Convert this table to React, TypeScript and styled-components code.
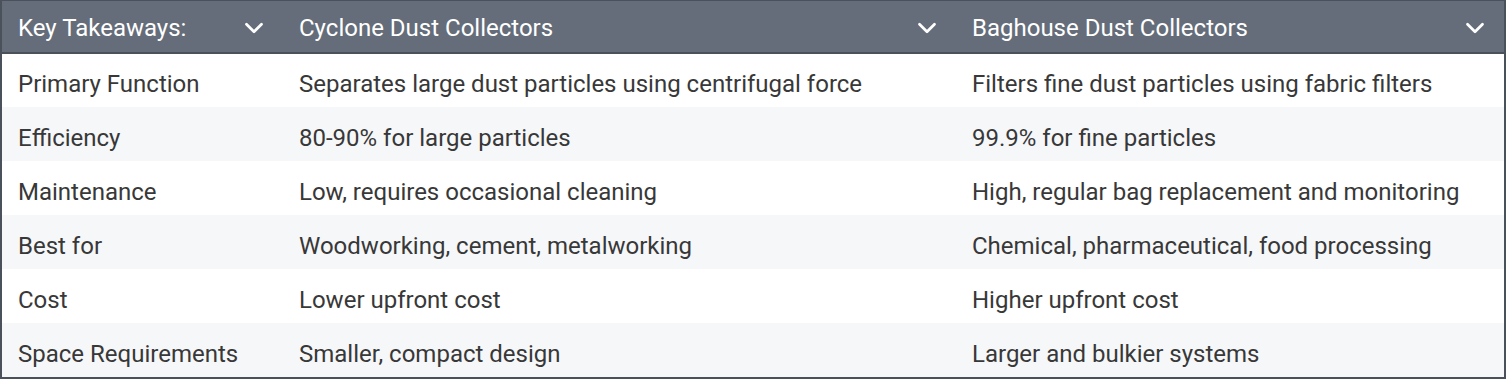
import React from "react";
import styled, { createGlobalStyle } from "styled-components";
import { ChevronDown } from "lucide-react";

const GlobalStyle = createGlobalStyle`
  html, body {
    margin: 0;
    padding: 0;
    background: #ffffff;
  }
  body {
    font-family: Roboto, "Liberation Sans", Arial, sans-serif;
  }
`;

const TableContainer = styled.div`
  width: 1506px;
  box-sizing: border-box;
  border: 2px solid #4b515a;
  border-top-width: 1px;
`;

const Table = styled.table`
  width: 100%;
  border-collapse: collapse;
  table-layout: fixed;
`;

const TableHeader = styled.th`
  background-color: #646d79;
  color: #ffffff;
  height: 52px;
  padding: 2px 14px 0 16px;
  box-sizing: border-box;
  text-align: left;
  font-size: 24px;
  line-height: 28px;
  font-weight: 400;
  border-bottom: 2px solid #4b515a;
`;

const HeaderInner = styled.div`
  display: flex;
  align-items: center;
  justify-content: space-between;
`;

const TableRow = styled.tr`
  &:nth-child(even) {
    background-color: #f6f7f9;
  }
`;

const TableCell = styled.td`
  height: 54px;
  padding: 7px 16px 0;
  font-size: 24px;
  line-height: 28px;
  color: #383838;
  white-space: nowrap;
  box-sizing: border-box;
`;

interface Row {
  label: string;
  cyclone: string;
  baghouse: string;
}

const headers = ["Key Takeaways:", "Cyclone Dust Collectors", "Baghouse Dust Collectors"];

const rows: Row[] = [
  {
    label: "Primary Function",
    cyclone: "Separates large dust particles using centrifugal force",
    baghouse: "Filters fine dust particles using fabric filters",
  },
  { label: "Efficiency", cyclone: "80-90% for large particles", baghouse: "99.9% for fine particles" },
  {
    label: "Maintenance",
    cyclone: "Low, requires occasional cleaning",
    baghouse: "High, regular bag replacement and monitoring",
  },
  {
    label: "Best for",
    cyclone: "Woodworking, cement, metalworking",
    baghouse: "Chemical, pharmaceutical, food processing",
  },
  { label: "Cost", cyclone: "Lower upfront cost", baghouse: "Higher upfront cost" },
  { label: "Space Requirements", cyclone: "Smaller, compact design", baghouse: "Larger and bulkier systems" },
];

const App: React.FC = () => {
  return (
    <>
      <GlobalStyle />
      <TableContainer>
        <Table>
          <colgroup>
            <col style={{ width: 281 }} />
            <col style={{ width: 673 }} />
            <col />
          </colgroup>
          <thead>
            <tr>
              {headers.map((h) => (
                <TableHeader key={h}>
                  <HeaderInner>
                    <span>{h}</span>
                    <ChevronDown size={30} strokeWidth={2.2} />
                  </HeaderInner>
                </TableHeader>
              ))}
            </tr>
          </thead>
          <tbody>
            {rows.map((row, index) => (
              <TableRow key={index}>
                <TableCell>{row.label}</TableCell>
                <TableCell>{row.cyclone}</TableCell>
                <TableCell>{row.baghouse}</TableCell>
              </TableRow>
            ))}
          </tbody>
        </Table>
      </TableContainer>
    </>
  );
};

export default App;
